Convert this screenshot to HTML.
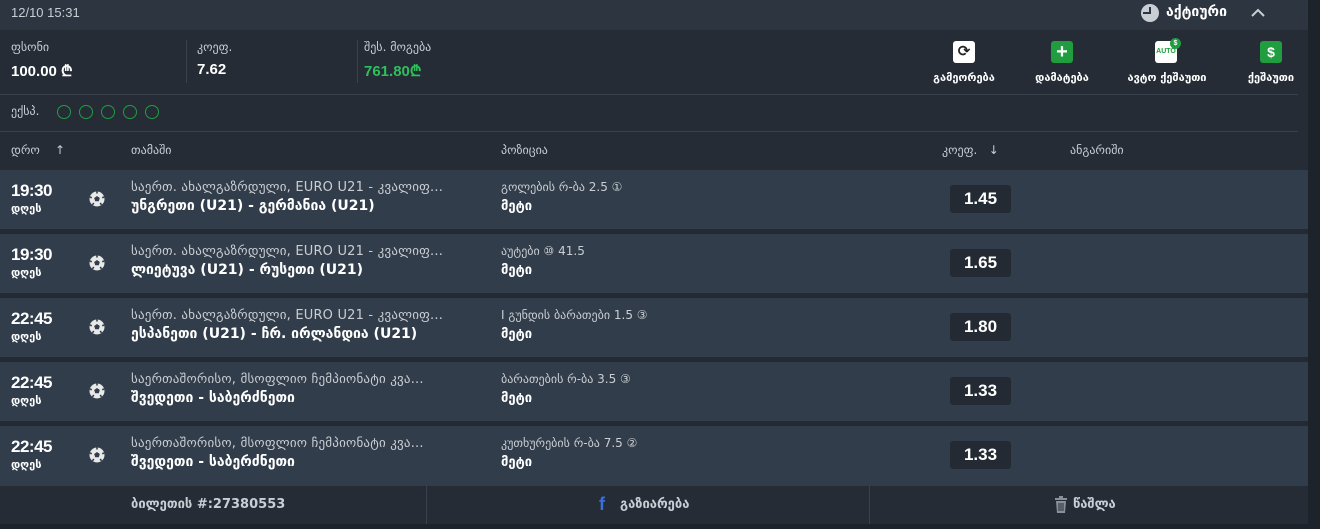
<!DOCTYPE html><html><head><meta charset="utf-8"><style>
*{margin:0;padding:0;box-sizing:border-box}
body{width:1320px;height:529px;background:#1d232b;font-family:"Liberation Sans","DejaVu Sans",sans-serif;color:#fff;overflow:hidden;position:relative}
.main{position:absolute;left:0;top:0;width:1308px;height:524px;background:#252c36}
.top{position:absolute;left:0;top:0;width:1308px;height:30px;background:#2c3540}
.abs{position:absolute;white-space:nowrap}
.lbl{font-size:12px;color:#c9ced4;font-family:"DejaVu Sans",sans-serif}
.big{font-size:15px;font-weight:bold}
.vline{position:absolute;width:1px;background:#39424d}
.hline{position:absolute;height:1px;background:#39424d;left:0;width:1298px}
.row{position:absolute;left:0;width:1308px;height:59px;background:#313d4a}
.gap{position:absolute;left:0;width:1308px;height:5px;background:#232a33}
.t1{position:absolute;left:11px;top:11px;font-size:17px;font-weight:bold;letter-spacing:-0.5px}
.t2{position:absolute;left:11px;top:32px;font-size:11px;font-weight:bold;font-family:"DejaVu Sans",sans-serif}
.ball{position:absolute;left:89px;top:21px}
.g1{position:absolute;left:131px;top:10px;font-size:13px;color:#c9ced4;font-family:"DejaVu Sans",sans-serif;letter-spacing:0.2px}
.g2{position:absolute;left:131px;top:28px;font-size:14px;font-weight:bold;font-family:"DejaVu Sans",sans-serif}
.p1{position:absolute;left:501px;top:10px;font-size:12px;color:#c9ced4;font-family:"DejaVu Sans",sans-serif}
.p2{position:absolute;left:501px;top:29px;font-size:13px;font-weight:bold;font-family:"DejaVu Sans",sans-serif}
.odd{position:absolute;left:950px;top:15px;width:61px;height:28px;background:#232a33;border-radius:3px;text-align:center;line-height:28px;font-size:17px;font-weight:bold}
.act{position:absolute;top:71px;font-size:11px;font-weight:bold;font-family:"DejaVu Sans",sans-serif;text-align:center;width:110px}
.ic{position:absolute;top:41px;width:22px;height:22px;border-radius:3px;text-align:center;line-height:22px;font-weight:bold}
</style></head><body>
<div class="main"></div>
<div class="top"></div>
<div class="abs" style="left:11px;top:5px;font-size:13px;color:#c9ced4">12/10 15:31</div>
<div class="abs" style="left:1141px;top:4px;width:18px;height:18px;border-radius:50%;background:#c9ced4"></div>
<div class="abs" style="left:1149px;top:7px;width:2px;height:7px;background:#2c3540"></div>
<div class="abs" style="left:1143px;top:12px;width:8px;height:2px;background:#2c3540"></div>
<div class="abs" style="left:1166px;top:4px;font-size:14px;font-weight:bold;font-family:'DejaVu Sans',sans-serif">აქტიური</div>
<svg class="abs" style="left:1251px;top:8px" width="14" height="9"><path d="M1 8 L7 2 L13 8" stroke="#c9ced4" stroke-width="2" fill="none"/></svg>

<div class="abs lbl" style="left:11px;top:40px">ფსონი</div>
<div class="abs big" style="left:11px;top:61px">100.00 ₾</div>
<div class="vline" style="left:186px;top:40px;height:43px"></div>
<div class="abs lbl" style="left:197px;top:40px">კოეფ.</div>
<div class="abs big" style="left:197px;top:61px">7.62</div>
<div class="vline" style="left:357px;top:40px;height:43px"></div>
<div class="abs lbl" style="left:364px;top:40px">შეს. მოგება</div>
<div class="abs big" style="left:364px;top:61px;color:#2fbf5b">761.80₾</div>

<div class="ic" style="left:953px;background:#fff;color:#222;font-size:15px">⟳</div>
<div class="act" style="left:909px">გამეორება</div>
<div class="ic" style="left:1051px;background:#1f9d3f;font-size:20px">+</div>
<div class="act" style="left:1007px">დამატება</div>
<div class="ic" style="left:1155px;background:#fff;color:#1f9d3f;font-size:7px">AUTO</div>
<div class="abs" style="left:1170px;top:38px;width:11px;height:11px;border-radius:50%;background:#1f9d3f;font-size:7px;text-align:center;line-height:11px;font-weight:bold">$</div>
<div class="act" style="left:1112px">ავტო ქეშაუთი</div>
<div class="ic" style="left:1260px;background:#1f9d3f;font-size:14px">$</div>
<div class="act" style="left:1216px">ქეშაუთი</div>

<div class="hline" style="top:94px"></div>
<div class="abs lbl" style="left:11px;top:104px">ექსპ.</div>
<div class="abs" style="left:57px;top:105px;width:14px;height:14px;border:1px solid #1f9d3f;border-radius:50%"></div>
<div class="abs" style="left:79px;top:105px;width:14px;height:14px;border:1px solid #1f9d3f;border-radius:50%"></div>
<div class="abs" style="left:101px;top:105px;width:14px;height:14px;border:1px solid #1f9d3f;border-radius:50%"></div>
<div class="abs" style="left:123px;top:105px;width:14px;height:14px;border:1px solid #1f9d3f;border-radius:50%"></div>
<div class="abs" style="left:145px;top:105px;width:14px;height:14px;border:1px solid #1f9d3f;border-radius:50%"></div>
<div class="hline" style="top:131px"></div>

<div class="abs lbl" style="left:11px;top:143px">დრო &nbsp;&nbsp;&nbsp;↑</div>
<div class="abs lbl" style="left:131px;top:143px">თამაში</div>
<div class="abs lbl" style="left:501px;top:143px">პოზიცია</div>
<div class="abs lbl" style="left:942px;top:143px">კოეფ. &nbsp;&nbsp;↓</div>
<div class="abs lbl" style="left:1070px;top:143px">ანგარიში</div>

<svg width="0" height="0" style="position:absolute"><defs><g id="b"><circle cx="8" cy="8" r="7.5" fill="#e8e8e8"/><path d="M8 5 L10.8 7 L9.8 10.3 L6.2 10.3 L5.2 7 Z" fill="#313d4a"/><path d="M8 0.5 L8 2.5 M0.8 6 L2.8 6.8 M15.2 6 L13.2 6.8 M3.5 13.8 L4.8 12 M12.5 13.8 L11.2 12" stroke="#313d4a" stroke-width="1.6"/></g></defs></svg>

<div class="row" style="top:170px"><div class="t1">19:30</div><div class="t2">დღეს</div><svg class="ball" width="16" height="16"><use href="#b"/></svg><div class="g1">საერთ. ახალგაზრდული, EURO U21 - კვალიფ...</div><div class="g2">უნგრეთი (U21) - გერმანია (U21)</div><div class="p1">გოლების რ-ბა 2.5 ①</div><div class="p2">მეტი</div><div class="odd">1.45</div></div>
<div class="gap" style="top:229px"></div>
<div class="row" style="top:234px"><div class="t1">19:30</div><div class="t2">დღეს</div><svg class="ball" width="16" height="16"><use href="#b"/></svg><div class="g1">საერთ. ახალგაზრდული, EURO U21 - კვალიფ...</div><div class="g2">ლიეტუვა (U21) - რუსეთი (U21)</div><div class="p1">აუტები ⑩ 41.5</div><div class="p2">მეტი</div><div class="odd">1.65</div></div>
<div class="gap" style="top:293px"></div>
<div class="row" style="top:298px"><div class="t1">22:45</div><div class="t2">დღეს</div><svg class="ball" width="16" height="16"><use href="#b"/></svg><div class="g1">საერთ. ახალგაზრდული, EURO U21 - კვალიფ...</div><div class="g2">ესპანეთი (U21) - ჩრ. ირლანდია (U21)</div><div class="p1">I გუნდის ბარათები 1.5 ③</div><div class="p2">მეტი</div><div class="odd">1.80</div></div>
<div class="gap" style="top:357px"></div>
<div class="row" style="top:362px"><div class="t1">22:45</div><div class="t2">დღეს</div><svg class="ball" width="16" height="16"><use href="#b"/></svg><div class="g1">საერთაშორისო, მსოფლიო ჩემპიონატი კვა...</div><div class="g2">შვედეთი - საბერძნეთი</div><div class="p1">ბარათების რ-ბა 3.5 ③</div><div class="p2">მეტი</div><div class="odd">1.33</div></div>
<div class="gap" style="top:421px"></div>
<div class="row" style="top:426px;height:60px"><div class="t1">22:45</div><div class="t2">დღეს</div><svg class="ball" width="16" height="16"><use href="#b"/></svg><div class="g1">საერთაშორისო, მსოფლიო ჩემპიონატი კვა...</div><div class="g2">შვედეთი - საბერძნეთი</div><div class="p1">კუთხურების რ-ბა 7.5 ②</div><div class="p2">მეტი</div><div class="odd">1.33</div></div>

<div class="vline" style="left:426px;top:486px;height:38px"></div>
<div class="vline" style="left:869px;top:486px;height:38px"></div>
<div class="abs" style="left:131px;top:497px;font-size:13px;font-weight:bold;color:#c9ced4;font-family:'DejaVu Sans',sans-serif">ბილეთის #:27380553</div>
<div class="abs" style="left:599px;top:494px;font-size:18px;font-weight:bold;color:#3b6fd8">f</div>
<div class="abs" style="left:620px;top:497px;font-size:13px;font-weight:bold;color:#c9ced4;font-family:'DejaVu Sans',sans-serif">გაზიარება</div>
<svg class="abs" style="left:1054px;top:496px" width="14" height="18"><rect x="1" y="2" width="12" height="2" fill="#8a9099"/><rect x="5" y="0" width="4" height="2" fill="#8a9099"/><path d="M2 5 H12 L11 17 H3 Z" fill="#8a9099"/><path d="M5 7 V15 M7 7 V15 M9 7 V15" stroke="#252c36" stroke-width="1"/></svg>
<div class="abs" style="left:1073px;top:497px;font-size:13px;font-weight:bold;color:#c9ced4;font-family:'DejaVu Sans',sans-serif">წაშლა</div>
</body></html>
